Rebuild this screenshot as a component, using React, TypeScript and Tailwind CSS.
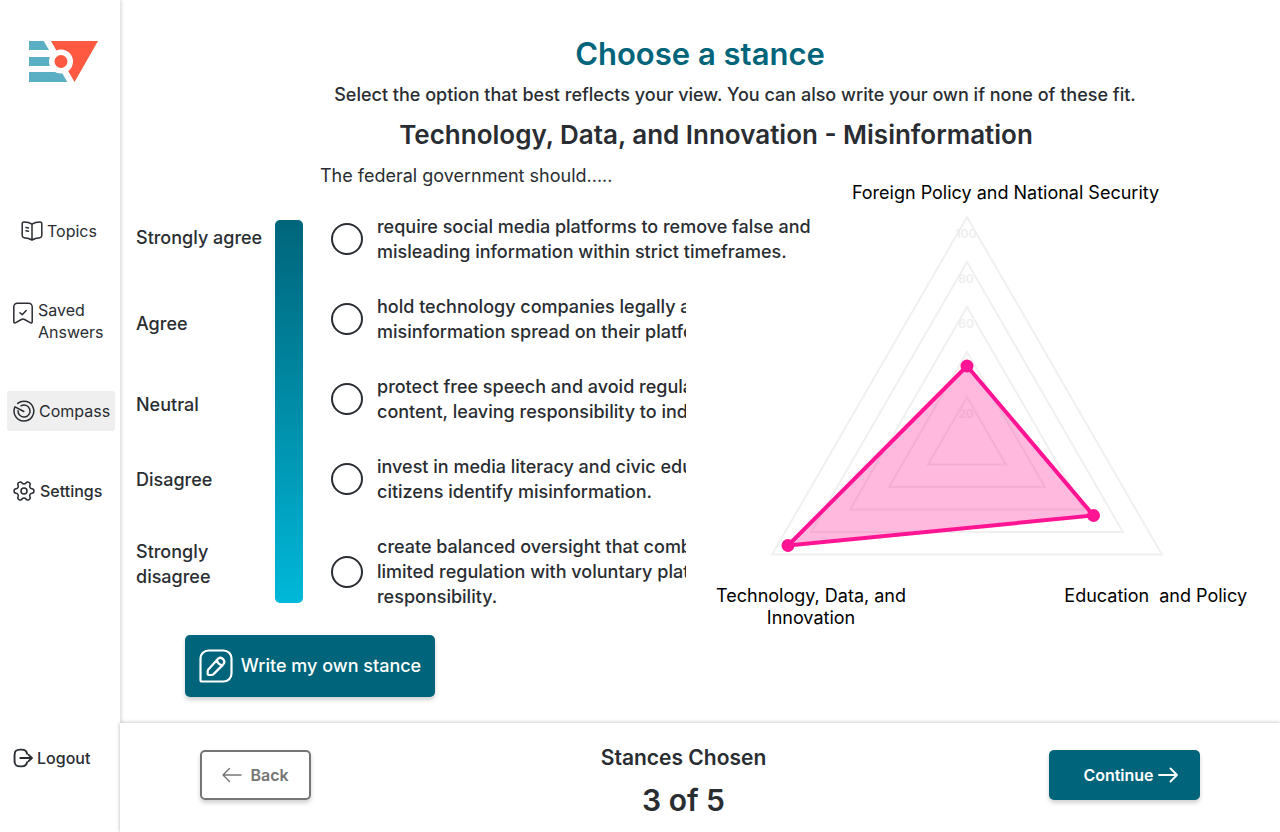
import { Settings } from "lucide-react";
import type { ReactNode } from "react";

function Logo() {
  return (
    <svg viewBox="0 0 70 42" className="h-[42px] w-[70px]" role="img" aria-label="Logo">
      <g fill="#5bafc5">
        <path d="M0 0h14.700l5.300 9H0z" />
        <path d="M0 16h24v9H0z" />
        <path d="M0 31h32.500l5.800 10H0z" />
      </g>
      <path d="M22 0h47L45.500 41z" fill="#ff5941" />
      <circle cx="32" cy="20.500" r="12" fill="#fff" />
      <circle cx="32" cy="20.500" r="6.500" fill="#ff5941" />
    </svg>
  );
}

function Icon({ children, className = "size-[22px]", width = 1.5 }: { children: ReactNode; className?: string; width?: number }) {
  return (
    <svg
      viewBox="0 0 22 22"
      className={`shrink-0 ${className}`}
      fill="none"
      stroke="currentColor"
      strokeWidth={width}
      strokeLinecap="round"
      strokeLinejoin="round"
      aria-hidden="true"
    >
      {children}
    </svg>
  );
}

const BookIcon = () => (
  <Icon>
    <path d="M11 4.200v15.800M11 4.200C9 2.800 5.500 2 3 2 1.800 2 1.200 2.700 1.200 3.800v12c0 1.100.8 1.800 1.900 1.900 2.700.2 5.700.9 7.900 2.300 2.200-1.400 5.200-2.100 7.900-2.300 1.100-.1 1.900-.8 1.900-1.900v-12c0-1.100-.6-1.800-1.800-1.800-2.500 0-6 .8-8 2.200z" />
    <path d="M5 7.500l2.500.4M5 10.800l2.500.4" />
  </Icon>
);

const BookmarkIcon = () => (
  <Icon>
    <path d="M1.800 4.700a3.500 3.500 0 0 1 3.500-3.500h11.400a3.500 3.500 0 0 1 3.500 3.500v15c0 1.200-.9 1.600-2 1l-5.600-3.200a3 3 0 0 0-3.200 0l-5.600 3.200c-1.100.6-2 .2-2-1z" />
    <path d="M8 10.800l2.200 2 4-4.300" />
  </Icon>
);

const CompassIcon = () => (
  <Icon>
    <path d="M4.700 3.400A9.900 9.900 0 1 1 1.700 7.500" />
    <path d="M8 5.800a6 6 0 1 1-3 5" />
    <path d="M2 6.800l8.800 4.700" />
  </Icon>
);

const LogoutIcon = () => (
  <Icon className="size-5" width={2.1}>
    <path d="M15.500 6.500C15 3 13.200 1.800 9.500 1.800H8c-4.700 0-6.300 1.600-6.300 6.200v6c0 4.600 1.600 6.200 6.300 6.200h1.500c3.700 0 5.500-1.200 6-4.700" />
    <path d="M8 11h12.500M17.200 7.500l3.600 3.500-3.600 3.500" />
  </Icon>
);

const PencilIcon = () => (
  <svg viewBox="0 0 34 34" className="size-[34px] shrink-0" fill="none" stroke="currentColor" strokeWidth="2.200" strokeLinecap="round" strokeLinejoin="round" aria-hidden="true">
    <path d="M1.500 9.500a8 8 0 0 1 8-8h15a8 8 0 0 1 8 8v15a8 8 0 0 1-8 8H3a1.500 1.500 0 0 1-1.500-1.500z" />
    <path d="M18.800 9.900a3.900 3.900 0 0 1 5.500 5.500l-9.500 9.500a3.500 3.500 0 0 1-2.500 1.100H9.700a1 1 0 0 1-1-1v-2.600a3.500 3.500 0 0 1 1.100-2.500zM17.800 11.200a7 7 0 0 0 5 5" />
  </svg>
);

const navBase = "flex items-center gap-1 rounded-[3px] text-left text-base leading-[22px]";

const stances = [
  { first: "require social media platforms to remove false and", rest: ["misleading information within strict timeframes."], open: true },
  { first: "hold technology companies legally accountable", rest: ["misinformation spread on their platforms"] },
  { first: "protect free speech and avoid regulating", rest: ["content, leaving responsibility to individuals"] },
  { first: "invest in media literacy and civic education", rest: ["citizens identify misinformation."] },
  { first: "create balanced oversight that combines", rest: ["limited regulation with voluntary platform", "responsibility."] },
];

const rings = [100, 80, 60, 40, 20];

function RadarChart() {
  return (
    <svg viewBox="0 0 400 348" className="w-[400px]" role="img" aria-label="Stance compass">
      {rings.map((v) => {
        const r = v * 2.25;
        return (
          <g key={v}>
            <polygon
              points={`200,${230 - r} ${200 + r * 0.866},${230 + r / 2} ${200 - r * 0.866},${230 + r / 2}`}
              fill="none"
              stroke="#f0f0f0"
              strokeWidth="2"
            />
            <text x="199" y={250.5 - r} textAnchor="middle" fontSize="12" fontWeight="600" fill="#eeeeee">
              {v}
            </text>
          </g>
        );
      })}
      <polygon points="200,154 326.500,303.500 21,333.500" fill="#ff1493" fillOpacity="0.3" stroke="#ff1493" strokeWidth="4" />
      <g fill="#ff1493">
        <circle cx="200" cy="154" r="6.500" />
        <circle cx="326.500" cy="303.500" r="6.500" />
        <circle cx="21" cy="333.500" r="6.500" />
      </g>
    </svg>
  );
}

export default function App() {
  return (
    <div className="flex min-h-screen bg-white font-['Inter','Liberation_Sans',sans-serif] text-[#292d32]">
      <aside className="flex w-[120px] shrink-0 flex-col shadow-[1px_0_4px_rgba(0,0,0,0.18)]">
        <div className="mt-[41px] ml-[29px]">
          <Logo />
        </div>
        <nav className="mt-[137px] flex flex-col">
          <a href="#topics" className={`${navBase} pl-[21px]`}>
            <BookIcon />
            Topics
          </a>
          <a href="#saved" className={`${navBase} mt-[57px] pl-3`}>
            <span className="self-start pt-[3px]"><BookmarkIcon /></span>
            <span>Saved<br />Answers</span>
          </a>
          <a href="#compass" aria-current="page" className={`${navBase} mt-12 mr-[5px] ml-[7px] h-10 bg-[#efefef] pl-[6px]`}>
            <CompassIcon />
            Compass
          </a>
          <a href="#settings" className={`${navBase} mt-12 pl-3 font-medium`}>
            <Settings className="size-6 shrink-0 rotate-90" strokeWidth={1.5} />
            Settings
          </a>
        </nav>
        <a href="#logout" className={`${navBase} mt-auto mb-[63px] pl-[13px] font-medium`}>
          <LogoutIcon />
          Logout
        </a>
      </aside>

      <div className="flex min-w-0 flex-1 flex-col">
        <main className="flex-1 pt-8">
          <h1 className="text-center text-[31px] leading-[44px] font-semibold text-[#00657b]">Choose a stance</h1>
          <p className="mt-[5px] pl-[70px] text-center text-lg leading-7 font-medium">
            Select the option that best reflects your view. You can also write your own if none of these fit.
          </p>
          <h2 className="mt-2 pl-8 text-center text-[26px] leading-9 font-semibold">
            Technology, Data, and Innovation - Misinformation
          </h2>

          <div className="flex">
            <section className="w-[566px] shrink-0 pt-[10px]">
              <p id="prompt" className="pl-[200px] text-lg leading-[25px]">The federal government should.....</p>
              <div className="mt-[26px] flex">
                <div className="w-[155px] shrink-0 pt-[11px] pl-4 text-lg leading-[25px] font-medium">
                  <p className="whitespace-nowrap">Strongly agree</p>
                  <p className="mt-[61px]">Agree</p>
                  <p className="mt-14">Neutral</p>
                  <p className="mt-[50px]">Disagree</p>
                  <p className="mt-[47px]">Strongly<br />disagree</p>
                </div>
                <div className="mt-[6px] mb-[6px] w-7 shrink-0 rounded-[5px] bg-linear-to-b from-[#00657b] to-[#00b8d9]" />
                <div role="radiogroup" aria-labelledby="prompt" className="flex min-w-0 flex-1 flex-col gap-[30px] pl-7">
                  {stances.map((s) => (
                    <label key={s.first} className="flex items-center gap-[14px] text-lg leading-[25px] font-medium">
                      <input type="radio" name="stance" className="size-8 shrink-0 appearance-none rounded-full border-2 border-[#292d32] checked:bg-[#00657b]" />
                      <span className={s.open ? "min-w-0 flex-1 whitespace-nowrap" : "min-w-0 flex-1 overflow-hidden whitespace-nowrap"}>
                        {s.first}
                        {s.rest.map((line) => (
                          <span key={line} className="block">{line}</span>
                        ))}
                      </span>
                    </label>
                  ))}
                </div>
              </div>
              <button className="mt-[26px] mb-[26px] ml-[65px] flex h-[62px] w-[250px] items-center justify-center gap-2 rounded-[5px] bg-[#00657b] text-lg font-medium whitespace-nowrap text-white shadow-[0_3px_4px_rgba(0,0,0,0.18)]">
                <PencilIcon />
                Write my own stance
              </button>
            </section>

            <section className="min-w-0 flex-1 pt-[29px] text-lg leading-[22px] text-black">
              <p className="pl-[45px] text-center">Foreign Policy and National Security</p>
              <div className="mt-2 flex justify-center pr-8">
                <RadarChart />
              </div>
              <div className="mt-[25px] flex items-start justify-between pr-[33px] pl-[30px]">
                <p className="text-center">Technology, Data, and<br />Innovation</p>
                <p className="whitespace-pre">Education  and Policy</p>
              </div>
            </section>
          </div>
        </main>

        <footer className="relative flex h-[109px] items-start justify-between bg-white px-20 shadow-[0_0_4px_rgba(0,0,0,0.28)]">
          <button className="mt-[27px] flex h-[50px] w-[111px] items-center justify-center gap-2 rounded-[5px] border-2 border-[#757575] text-base font-semibold text-[#757575] shadow-[0_3px_4px_rgba(0,0,0,0.18)]">
            <svg viewBox="0 0 20 16" className="h-4 w-5" fill="none" stroke="currentColor" strokeWidth="1.400" strokeLinecap="round" strokeLinejoin="round" aria-hidden="true">
              <path d="M19 8H1M7.500 1.500L1 8l6.500 6.500" />
            </svg>
            Back
          </button>
          <div className="mt-5 pl-[7px] text-center font-semibold">
            <p className="text-[21px] leading-[30px]">Stances Chosen</p>
            <p className="mt-1 text-[30px] leading-[46px]">3 of 5</p>
          </div>
          <button className="mt-[27px] flex h-[50px] w-[151px] items-center justify-center gap-1 rounded-[5px] bg-[#00657b] pl-3 text-base font-semibold text-white shadow-[0_3px_4px_rgba(0,0,0,0.18)]">
            Continue
            <svg viewBox="0 0 20 16" className="h-4 w-5" fill="none" stroke="currentColor" strokeWidth="1.800" strokeLinecap="round" strokeLinejoin="round" aria-hidden="true">
              <path d="M1 8h18M12.500 1.500L19 8l-6.500 6.500" />
            </svg>
          </button>
        </footer>
      </div>
    </div>
  );
}
